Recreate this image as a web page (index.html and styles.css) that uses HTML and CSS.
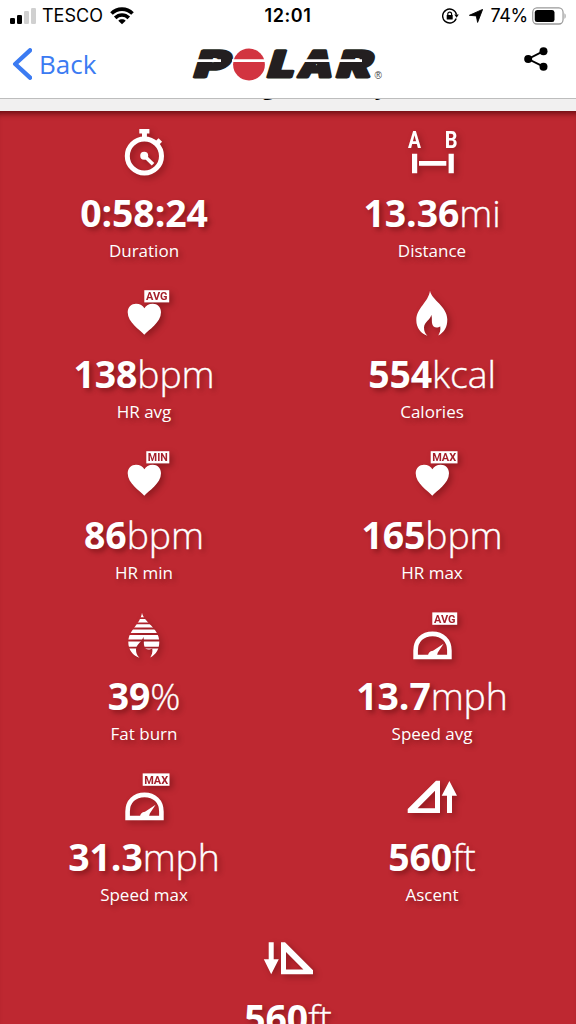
FILE: index.html
```html
<!DOCTYPE html>
<html lang="en">
	<head>
		<meta charset="utf-8">
		<meta name="viewport" content="width=device-width, initial-scale=1.0">
		<title>Polar</title>
		<link rel="stylesheet" href="styles.css">
	</head>
<body>
<!-- shared icon parts -->
<svg class="defs" width="0" height="0">
	<defs>
		<path id="heart" d="M32.3 53.7C28 49 15.7 41.5 15.7 31.3C15.7 26 19.5 22.7 24 22.7C28 22.7 31 24.5 32.4 27.2C33.8 24.5 36.8 22.7 40.8 22.7C45.3 22.7 49 26 49 31.3C49 41.5 36.6 49 32.3 53.7Z"/>
		<path id="flame" d="M30 9.7C31.5 19 47.3 25 47.3 38.5C47.3 46 44.5 51 38.3 54.6C39.6 52 41 49 40.2 45.2C37 48 32.6 46.5 32 42C31.6 39 32.4 37 31.2 33.8C30.8 39 24.2 40.5 24 46.5C24 50 25 52.5 27.4 54.8C21 52.5 16.3 47 16.3 39C16.3 27 28.5 21 30 9.7Z"/>
		<g id="gauge">
			<path d="M15.6 54V47.5C15.6 37.5 22.5 30.9 32.5 30.9C42.5 30.9 49.4 37.5 49.4 47.5V54Z" fill="none" stroke="#fff" stroke-width="4.6"/>
			<path d="M43.6 40.8L37.8 49.5C37.4 51 37 52 37 53H28C28 50 29.6 48.2 33 47.8Z"/>
		</g>
		<mask id="stripes">
			<rect width="64" height="64" fill="#fff"/>
			<path d="M0 15.2H64M0 20.3H64M0 25.5H64M0 31H64M0 37.5H64M0 44.6H64" stroke="#000" stroke-width="1.8"/>
		</mask>
	</defs>
</svg>

<header>
	<div class="status">
		<div class="carrier">
			<svg width="26" height="16" viewBox="0 0 26 16">
				<rect x="0" y="10" width="5" height="6" rx="1.3"/>
				<rect x="7" y="7" width="5" height="9" rx="1.3"/>
				<rect x="14" y="3" width="5" height="13" rx="1.3" fill="#d0d0d0"/>
				<rect x="21" y="0" width="5" height="16" rx="1.3" fill="#d0d0d0"/>
			</svg>
			<span class="operator">TESCO</span>
			<svg width="24" height="18" viewBox="0 0 24 18" fill="none" stroke="#000" stroke-width="3.6">
				<path d="M1.5 6.6C7.3.6 16.7.6 22.5 6.6"/>
				<path d="M5.2 10.9C9.2 7 14.8 7 18.8 10.9"/>
				<path d="M12 17.2L8.3 13.7C10.3 11.8 13.7 11.8 15.7 13.7Z" fill="#000" stroke="none"/>
			</svg>
		</div>
		<div class="time">12:01</div>
		<div class="power">
			<svg width="17" height="16" viewBox="0 0 17 16">
				<path d="M14.2 10.5A7 7 0 1 1 14.5 6.6" fill="none" stroke="#000" stroke-width="1.4"/>
				<path d="M12.3 6.6H16.8L14.6 9.8Z"/>
				<rect x="4.7" y="7" width="6" height="4.6" rx=".6"/>
				<path d="M5.8 7.5V6A1.9 1.9 0 0 1 9.6 6V7.5" fill="none" stroke="#000" stroke-width="1.2"/>
			</svg>
			<svg class="arrow" width="14" height="14" viewBox="0 0 14 14"><path d="M13.6.4L8.6 13.4L7.3 6.9L.4 6.3Z" stroke="#000" stroke-width=".9" stroke-linejoin="round"/></svg>
			<span class="percent">74%</span>
			<svg width="34" height="18" viewBox="0 0 37 18" preserveAspectRatio="none">
				<rect x=".8" y=".8" width="33" height="16.2" rx="4.5" fill="none" stroke="#999" stroke-width="1.3"/>
				<rect x="3" y="3" width="21.5" height="12" rx="2.5"/>
				<path d="M35.4 6.2C37 7 37 11 35.4 11.8Z" fill="#999"/>
			</svg>
		</div>
	</div>
	<nav>
		<a class="back">
			<svg width="20" height="32" viewBox="0 0 20 32"><path d="M18 2.3L3.2 16L18 29.7" fill="none" stroke="#3b7bf2" stroke-width="4.4" stroke-linecap="round" stroke-linejoin="round"/></svg>
			<span>Back</span>
		</a>
		<svg class="logo" width="194" height="34" viewBox="0 0 194 34">
			<g class="logo-text">
				<text transform="translate(1.5 29.4) skewX(-17)" textLength="34" lengthAdjust="spacingAndGlyphs">P</text>
				<text transform="translate(75 29.4) skewX(-17)" textLength="26" lengthAdjust="spacingAndGlyphs">L</text>
				<text transform="translate(106 29.4) skewX(-12)" textLength="34" lengthAdjust="spacingAndGlyphs">A</text>
				<text transform="translate(144 29.4) skewX(-17)" textLength="34" lengthAdjust="spacingAndGlyphs">R</text>
			</g>
			<circle cx="58" cy="16.5" r="15.9" fill="#d23440"/>
			<path d="M4 12.6H30M41 12.6H75M112 12.6H141M148 12.6H171" stroke="#fff" stroke-width="2.6"/>
			<text class="reg" x="183.5" y="31">®</text>
		</svg>
		<svg class="share" width="24" height="24" viewBox="0 0 24 24">
			<path d="M19.5 4.2L4.2 12L19.5 19.7" fill="none" stroke="#000" stroke-width="1.9"/>
			<circle cx="4.2" cy="12" r="4"/>
			<circle cx="19.5" cy="4.2" r="4"/>
			<circle cx="19.5" cy="19.7" r="4"/>
		</svg>
	</nav>
</header>

<svg class="strip" width="576" height="13" viewBox="0 1 576 13">
	<text x="260" y="-3.8">g</text>
	<text x="382" y="-3.8">y</text>
</svg>

<div class="stats">
	<div class="stat">
		<svg class="icon" viewBox="0 0 64 64">
			<circle cx="32.4" cy="36" r="17.1" fill="none" stroke="#fff" stroke-width="5"/>
			<path d="M27.3 9H37.4V13.6H34.9V18H30V13.6H27.3Z"/>
			<path d="M43.6 24.6L48.3 20" stroke="#fff" stroke-width="5"/>
			<circle cx="32.2" cy="35.7" r="4"/>
			<path d="M32.2 35.7L41 44.3" stroke="#fff" stroke-width="3.6"/>
		</svg>
		<div class="value">0:58:24</div>
		<div class="label">Duration</div>
	</div>
	<div class="stat">
		<svg class="icon" viewBox="0 0 64 64">
			<text class="point" x="8" y="28.3" textLength="13" lengthAdjust="spacingAndGlyphs">A</text>
			<text class="point" x="44.8" y="28.3" textLength="12.8" lengthAdjust="spacingAndGlyphs">B</text>
			<path d="M12 33.7H17.2V53.3H12ZM19 41H46.3V45.7H19ZM48.6 33.7H53.8V53.3H48.6Z"/>
		</svg>
		<div class="value">13.36<span>mi</span></div>
		<div class="label">Distance</div>
	</div>
	<div class="stat">
		<svg class="icon" viewBox="0 0 64 64">
			<use href="#heart"/>
			<rect x="32.3" y="9.2" width="24.9" height="12.2"/>
			<text class="badge" x="34" y="19.4" textLength="21.5" lengthAdjust="spacingAndGlyphs">AVG</text>
		</svg>
		<div class="value">138<span>bpm</span></div>
		<div class="label">HR avg</div>
	</div>
	<div class="stat">
		<svg class="icon" viewBox="0 0 64 64"><use href="#flame"/></svg>
		<div class="value">554<span>kcal</span></div>
		<div class="label">Calories</div>
	</div>
	<div class="stat">
		<svg class="icon" viewBox="0 0 64 64">
			<use href="#heart"/>
			<rect x="34.3" y="9.2" width="23" height="12.2"/>
			<text class="badge" x="35.8" y="19.4" textLength="20" lengthAdjust="spacingAndGlyphs">MIN</text>
		</svg>
		<div class="value">86<span>bpm</span></div>
		<div class="label">HR min</div>
	</div>
	<div class="stat">
		<svg class="icon" viewBox="0 0 64 64">
			<use href="#heart"/>
			<rect x="30.7" y="9.2" width="26.8" height="12.2"/>
			<text class="badge" x="32.2" y="19.4" textLength="24" lengthAdjust="spacingAndGlyphs">MAX</text>
		</svg>
		<div class="value">165<span>bpm</span></div>
		<div class="label">HR max</div>
	</div>
	<div class="stat">
		<svg class="icon" viewBox="0 0 64 64"><g mask="url(#stripes)"><use href="#flame"/></g></svg>
		<div class="value">39<span>%</span></div>
		<div class="label">Fat burn</div>
	</div>
	<div class="stat">
		<svg class="icon" viewBox="0 0 64 64">
			<use href="#gauge"/>
			<rect x="32.3" y="9.4" width="24.9" height="12.4"/>
			<text class="badge" x="34" y="19.8" textLength="21.5" lengthAdjust="spacingAndGlyphs">AVG</text>
		</svg>
		<div class="value">13.7<span>mph</span></div>
		<div class="label">Speed avg</div>
	</div>
	<div class="stat">
		<svg class="icon" viewBox="0 0 64 64">
			<use href="#gauge"/>
			<rect x="30.7" y="9.4" width="26.8" height="12.4"/>
			<text class="badge" x="32.2" y="19.8" textLength="24" lengthAdjust="spacingAndGlyphs">MAX</text>
		</svg>
		<div class="value">31.3<span>mph</span></div>
		<div class="label">Speed max</div>
	</div>
	<div class="stat">
		<svg class="icon" viewBox="0 0 64 64">
			<path fill-rule="evenodd" d="M40 16.7V49H7.7V45L36 16.7ZM35 26.8L17.6 44.3H35Z"/>
			<path d="M49.4 17L57 31.7H52V49H47V31.7H41.7Z"/>
		</svg>
		<div class="value">560<span>ft</span></div>
		<div class="label">Ascent</div>
	</div>
	<div class="stat last">
		<svg class="icon" viewBox="0 0 64 64">
			<path fill-rule="evenodd" d="M25 17.3V49.3H57V45.3L29 17.3ZM30 27.1L47.4 44.6H30Z"/>
			<path d="M15.2 49.3L22.8 34.3H17.7V17.3H12.7V34.3H7.8Z"/>
		</svg>
		<div class="value">560<span>ft</span></div>
	</div>
</div>
</body>
</html>
```
FILE: styles.css
```css
*{
	margin: 0;
	padding: 0;
	box-sizing: border-box;
}
html,body{
	width: 576px;
	height: 1024px;
	overflow: hidden;
}
body{
	background: #be2831;
	font-family: "Open Sans", "Noto Sans", sans-serif;
}
svg{
	display: block;
	flex: none;
}
.defs{
	position: absolute;
}
header{
	height: 98px;
	background: #fff;
}
.status{
	height: 32px;
	display: grid;
	grid-template-columns: 1fr auto 1fr;
	align-items: center;
	padding: 0 10px;
	font-family: Inter, "Liberation Sans", sans-serif;
	font-size: 18px;
	line-height: 32px;
}
.carrier,.power{
	display: flex;
	align-items: center;
}
.operator{
	width: 60px;
	margin: 0 8px 0 6px;
}
.time{
	font-weight: 600;
	letter-spacing: 0.6px;
}
.power{
	justify-content: flex-end;
}
.arrow{
	margin: 0 7px 0 10px;
}
.percent{
	margin-right: 4px;
	letter-spacing: -0.3px;
}
nav{
	height: 66px;
	display: flex;
	align-items: flex-start;
}
.back{
	width: 191px;
	height: 66px;
	padding: 0 0 2px 12px;
	display: flex;
	align-items: center;
	color: #3b7bf2;
	font-size: 26px;
}
.back span{
	margin: -1px 0 0 7px;
}
.logo{
	margin-top: 16px;
	overflow: visible;
}
.logo-text{
	font-family: Inter, "Liberation Sans", sans-serif;
	font-size: 36px;
	font-weight: 900;
	fill: #231f20;
	stroke: #231f20;
	stroke-width: 3px;
	stroke-linejoin: round;
}
.reg{
	font-family: "Liberation Sans", sans-serif;
	font-size: 10px;
	fill: #444;
}
.share{
	margin: 15px 0 0 139px;
}
.strip{
	background: #f1f0f0;
	border-top: 1px solid #bdbdbd;
	font-size: 24px;
	font-weight: 700;
	overflow: hidden;
}
.stats{
	height: 913px;
	display: grid;
	grid-template-columns: 1fr 1fr;
	grid-auto-rows: 161px;
	overflow: hidden;
	box-shadow: inset 0 7px 6px -5px rgba(70,0,5,.8);
	color: #fff;
}
.stat{
	padding-top: 9px;
	text-align: center;
	text-shadow: 3px 3px 5px rgba(60,0,0,.4);
}
.last{
	grid-column: 1 / 3;
}
.icon{
	width: 64px;
	height: 64px;
	margin: 0 auto 3px;
	fill: #fff;
	filter: drop-shadow(3px 3px 3px rgba(60,0,0,.35));
}
.point{
	font-family: Roboto, sans-serif;
	font-size: 23px;
	font-weight: 700;
	text-shadow: none;
}
.badge{
	font-family: Roboto, sans-serif;
	font-size: 11.5px;
	font-weight: 700;
	fill: #a5202b;
	text-shadow: none;
}
.value{
	height: 52px;
	font-size: 37.4px;
	font-weight: 700;
	line-height: 52px;
	letter-spacing: -0.1px;
}
.value span{
	font-weight: 300;
	-webkit-text-stroke: 0.35px #fff;
}
.label{
	font-size: 17px;
	line-height: 24px;
}
```
